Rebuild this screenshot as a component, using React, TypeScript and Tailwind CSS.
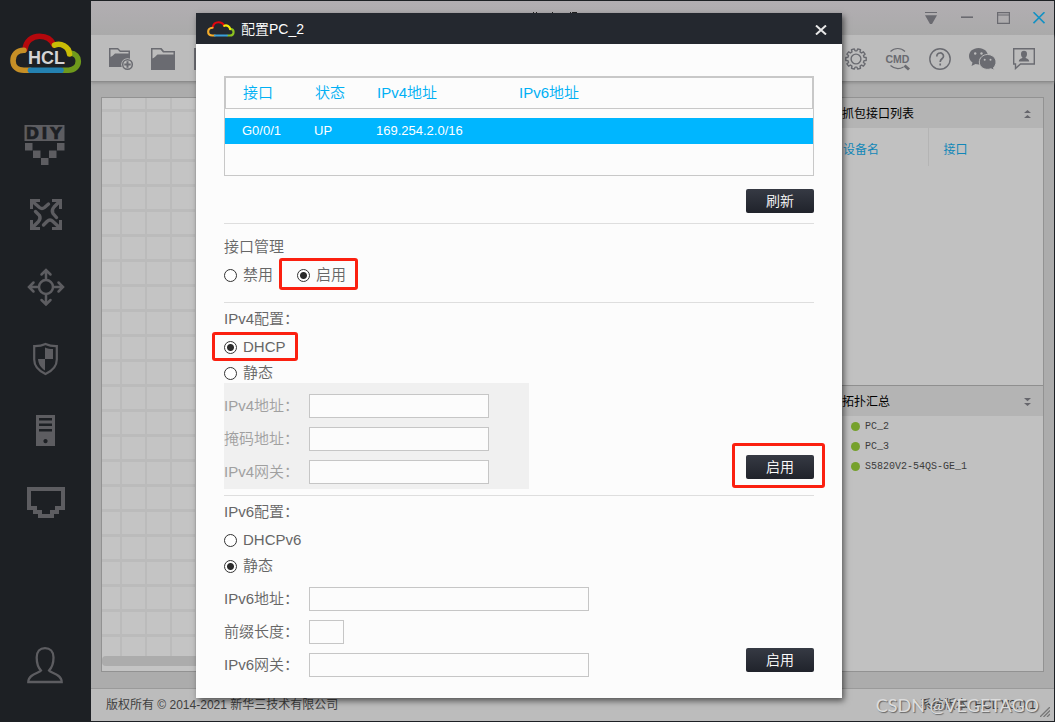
import React from 'react';

const SANS = "font-['Liberation_Sans','Noto_Sans_CJK_SC',sans-serif]";

function CloudArcs() {
  return (
    <g fill="none" strokeWidth="5.6" strokeLinecap="round">
      <path stroke="currentColor" className="text-[var(--red)]" d="M15 16.5C16 8 22 3.2 29.500 3.200C36 3.200 41.500 6.500 44 12" />
      <path stroke="currentColor" className="text-[var(--orange)]" d="M14 17.200C6.500 17.200 3 22 3 27.700C3 33.500 7.500 37.200 14 37.200L20 37.200" />
      <path stroke="currentColor" className="text-[var(--green)]" d="M60 20C65.500 20.500 68.300 24 68.300 28C68.300 33.500 64 37.200 58.500 37.200L53 37.200" />
      <path stroke="currentColor" className="text-[var(--blue)]" d="M20.500 37.200H51" />
      <path stroke="currentColor" className="text-[var(--yellow)]" d="M44.500 12.200C50.500 9.700 58.800 13 59.500 21" />
    </g>
  );
}

function Logo() {
  return (
    <svg viewBox="0 0 72 41" className="h-[41px] w-[72px] [--blue:#2481b1] [--green:#6f991c] [--orange:#c68f26] [--red:#b5080d] [--yellow:#c9bd06]" role="img" aria-label="HCL">
      <CloudArcs />
      <text x="36.500" y="30.500" textAnchor="middle" fontSize="18" fontWeight="700" fill="#d4d4d6" fontFamily="Liberation Sans, sans-serif">HCL</text>
    </svg>
  );
}

function MiniLogo() {
  return (
    <svg viewBox="0 0 72 41" className="h-4 w-7 [--blue:#3aa0dc] [--green:#8cc220] [--orange:#f4ac2c] [--red:#e2060d] [--yellow:#f8ea08]" aria-hidden="true">
      <CloudArcs />
    </svg>
  );
}

const sideItems = [
  {
    label: 'DIY',
    icon: (
      <>
        <rect x="24.500" y="18" width="40" height="16" fill="currentColor" />
        <g fill="#1d2024" stroke="#1d2024" strokeWidth="0.600" fontSize="16" fontWeight="700" fontFamily="DejaVu Sans, sans-serif" textAnchor="middle">
          <text x="32.500" y="32">D</text>
          <text x="44.500" y="32">I</text>
          <text x="56" y="32">Y</text>
        </g>
        <path fill="currentColor" d="M25 36h7.500v7.500h-7.500zM57 36h7.500v7.500h-7.500zM33 43.500h7.500v7.500h-7.500zM49 43.500h7.500v7.500h-7.500zM41 51h7.500v7h-7.500z" />
      </>
    ),
  },
  {
    label: '交换机',
    icon: (
      <g fill="none" stroke="currentColor" strokeWidth="3">
        <path d="M31.500 30V21.500H40M52 21.500H60.500V30M60.500 41V49.500H52M40 49.500H31.500V41" />
        <path strokeLinecap="round" strokeWidth="3.400" d="M32 22L39.500 28.500Q42 30.500 44.500 28.500L48.500 25M60 22L54 28Q51 31.500 53 34.500L56.500 38.500M60 49L53 42.500Q50 39.500 47 42.500L43.500 46M32 49L38.500 42.500Q41 39.500 39.500 36.500L35.500 32.500" />
      </g>
    ),
  },
  {
    label: '路由器',
    icon: (
      <g fill="none" stroke="currentColor" strokeWidth="2.500" strokeLinecap="round">
        <circle cx="46" cy="36" r="7" />
        <path d="M46 28.500V20M46 43.500V53M38.500 36H30M53.500 36H62M41.500 23.500L46 19L50.500 23.500M41.500 49L46 53.500L50.500 49M33.500 31.500L29 36L33.500 40.500M58.500 31.500L63 36L58.500 40.500" />
      </g>
    ),
  },
  {
    label: '防火墙',
    icon: (
      <>
        <path fill="none" stroke="currentColor" strokeWidth="2.200" d="M45.500 21C42 22.700 38 23.300 34.200 23.200V36.500C34.200 43.500 39 48 45.500 51C52 48 56.800 43.500 56.800 36.500V23.200C53 23.300 49 22.700 45.500 21Z" />
        <path fill="currentColor" d="M45 24.500C47.500 25.700 50 26 53 26V36H45ZM45 36V47.500C41 45 38.300 41 38 36Z" />
      </>
    ),
  },
  {
    label: '终端',
    icon: (
      <path fill="currentColor" fillRule="evenodd" d="M36 20h19v31h-19zM39 23v2.500h13v-2.500zM39 28.500v2.500h13v-2.500zM39 34v2.500h13v-2.500zM45.500 44a2.100 2.100 0 1 0 .010 0z" />
    ),
  },
  {
    label: '连线',
    icon: <path fill="none" stroke="currentColor" strokeWidth="4" d="M29 22H63V41H57V45H52V49H40V45H35V41H29Z" />,
  },
];

function Sidebar() {
  return (
    <aside className="relative z-10 flex w-[91px] shrink-0 flex-col bg-[#1d2024] pt-8 text-[#5d5d61]">
      <div className="flex h-[74px] justify-center">
        <Logo />
      </div>
      <nav className="flex flex-col">
        {sideItems.map((it) => (
          <button key={it.label} type="button" aria-label={it.label}>
            <svg viewBox="0 0 91 72" className="h-[72px] w-[91px]">{it.icon}</svg>
          </button>
        ))}
      </nav>
      <button type="button" aria-label="用户" className="mt-auto mb-[37px] flex justify-center">
        <svg viewBox="0 0 38 38" className="h-[38px] w-[38px]" fill="none" stroke="currentColor" strokeWidth="2.300">
          <path d="M14 24.500C10 20.500 9.700 15.500 9.700 11.500C9.700 5.500 13 2.200 18 2.200S26.500 5.500 26.500 11.500C26.500 15.500 26 20.500 22 24.500C23 27 34.700 27.500 34.700 36H1.300C1.300 27.500 13 27 14 24.500Z" />
        </svg>
      </button>
    </aside>
  );
}

function TitleBar() {
  const btn = 'flex h-[34px] w-[30px] items-center justify-center';
  return (
    <header className="relative flex h-[34px] justify-end gap-1.5 bg-linear-to-b from-[#b2aeb2] to-[#aaaaaa] text-[#6a6a70]">
      <svg viewBox="0 0 48 4" className="absolute top-[10px] left-[440px] h-1 w-12" fill="#222" aria-hidden="true">
        <path d="M2 1h1v2h-1zM5 1h1v2h-1zM21 1h1v2h-1zM39 1h1v2h-1zM41 1h5v2h-5z" />
      </svg>
      <button type="button" aria-label="菜单" className={btn}>
        <svg viewBox="0 0 12 12" className="size-3" fill="currentColor"><path d="M0 0h12v1h-12zM0 3.300h12L7 12h-2z" /></svg>
      </button>
      <button type="button" aria-label="最小化" className={btn}>
        <svg viewBox="0 0 12 12" className="size-3" fill="currentColor"><path d="M0 4.400h12v1.600h-12z" /></svg>
      </button>
      <button type="button" aria-label="最大化" className={btn}>
        <svg viewBox="0 0 13 12" className="h-3 w-[13px]" fill="none" stroke="currentColor" strokeWidth="1.200"><path d="M.6.6h11.800v10.800h-11.800zM.5 3h12" /></svg>
      </button>
      <button type="button" aria-label="关闭窗口" className={`${btn} text-[#1291c4]`}>
        <svg viewBox="0 0 12 12" className="size-3" fill="none" stroke="currentColor" strokeWidth="1.600"><path d="M.5.2l11 11M11.500.2l-11 11" /></svg>
      </button>
    </header>
  );
}

const FOLDER = 'M0 0H10.500L13 3H24V22H0ZM1.500 1.500V10.500C3.500 9.500 5 8 6.500 6.500H22.500V4.500H12L9.500 1.500Z';

function gearPath() {
  const pts: string[] = [];
  const n = 10;
  for (let i = 0; i < n; i++) {
    const a = (i * 2 * Math.PI) / n - Math.PI / 2 + Math.PI / n;
    const at = (r: number, d: number) => `${(11 + r * Math.cos(a + d)).toFixed(2)} ${(11 + r * Math.sin(a + d)).toFixed(2)}`;
    pts.push(at(8.2, -0.2), at(10.3, -0.14), at(10.3, 0.14), at(8.2, 0.2));
  }
  return `M${pts.join('L')}Z`;
}

function Toolbar() {
  const btn = 'flex w-[42px] items-center justify-center';
  return (
    <div className="flex h-[47px] items-stretch justify-between border-b border-[#8c8c8c] bg-[#bcbcbc] pt-0.5 pr-[9px] pl-[18px] text-[#6a6b71] shadow-[0_1px_3px_#8c8c8c]">
      <div className="flex items-center gap-[18px]">
        <button type="button" aria-label="新建工程">
          <svg viewBox="0 0 24 22" className="h-[22px] w-6 overflow-visible">
            <path fill="currentColor" fillRule="evenodd" d="M0 0H9L11.500 2.500H21V19H0ZM1.500 1.500V9C3.500 8 4.500 7 6 5.500H19.500V4H11L8.500 1.500Z" />
            <circle cx="18.500" cy="16.500" r="6.300" fill="#bcbcbc" />
            <circle cx="18.500" cy="16.500" r="4.800" fill="#bcbcbc" stroke="currentColor" strokeWidth="1.500" />
            <path stroke="currentColor" strokeWidth="2" d="M18.500 13.300v6.400M15.300 16.500h6.400" />
          </svg>
        </button>
        <button type="button" aria-label="打开工程">
          <svg viewBox="0 0 24 22" className="h-[22px] w-6" fill="currentColor" fillRule="evenodd"><path d={FOLDER} /></svg>
        </button>
        <button type="button" aria-label="保存工程">
          <svg viewBox="0 0 24 22" className="h-[22px] w-6" fill="currentColor"><path d="M1 0h22v22h-22z" /></svg>
        </button>
      </div>
      <div className="flex">
        <button type="button" aria-label="设置" className={btn}>
          <svg viewBox="0 0 22 22" className="size-[22px]" fill="none" stroke="currentColor" strokeWidth="1.400" strokeLinejoin="round"><path d={gearPath()} /><circle cx="11" cy="11" r="4.900" /></svg>
        </button>
        <button type="button" aria-label="命令行" className={btn}>
          <svg viewBox="0 0 26 24" className="h-6 w-[26px] overflow-visible" fill="none" stroke="currentColor">
            <path strokeWidth="1.200" d="M5.500 4.500C9.500 0.500 16 0.500 20 4.500M5.500 18.500C9.500 22 14.500 22.300 18.500 20" />
            <path strokeWidth="3" d="M19.500 18.500L24 22.500" />
            <text x="12.500" y="15.500" textAnchor="middle" fontSize="10.500" fontWeight="700" fill="currentColor" stroke="none" fontFamily="Liberation Sans, sans-serif">CMD</text>
          </svg>
        </button>
        <button type="button" aria-label="帮助" className={btn}>
          <svg viewBox="0 0 22 22" className="size-[22px]" fill="none" stroke="currentColor" strokeWidth="1.400">
            <circle cx="11" cy="11" r="10.200" />
            <path strokeWidth="1.700" d="M7.800 8.500C7.800 3.800 14.500 3.900 14.500 8.200C14.500 10.800 11.200 10.800 11.200 14M11.200 15.500V17.500" />
          </svg>
        </button>
        <button type="button" aria-label="微信" className={btn}>
          <svg viewBox="0 0 27 22" className="h-[22px] w-[27px]">
            <path fill="currentColor" d="M9.500 0C15 0 19 3.600 19 8.200S15 16.500 9.500 16.500C8.500 16.500 7.500 16.300 6.500 16L2.500 18L3.500 14.500C1.300 13 0 10.800 0 8.200C0 3.600 4 0 9.500 0Z" />
            <path fill="currentColor" stroke="#bcbcbc" d="M18.500 6.500C23.200 6.500 27 9.800 27 14C27 16.300 26 18.200 24.500 19.500L25.300 22.300L22 20.800C16 22.700 10.300 19.500 10.300 14C10.300 9.800 14 6.500 18.500 6.500Z" />
            <g fill="#bcbcbc"><circle cx="6.200" cy="5.500" r="1.200" /><circle cx="12.500" cy="5.500" r="1.200" /><circle cx="15.700" cy="11.700" r="1" /><circle cx="21.500" cy="11.700" r="1" /></g>
          </svg>
        </button>
        <button type="button" aria-label="反馈" className={btn}>
          <svg viewBox="0 0 22 22" className="size-[22px]">
            <path fill="none" stroke="currentColor" strokeWidth="1.400" d="M.7.7H21.300V16H7.500L2.500 20.500V16H.7Z" />
            <path fill="currentColor" d="M11 2.800C13 2.800 14 4 14 6C14 7.800 13.300 8.800 12.500 9.500C13 10.800 16 10.500 16.200 13.500H5.800C6 10.500 9 10.800 9.500 9.500C8.700 8.800 8 7.800 8 6C8 4 9 2.800 11 2.800Z" />
          </svg>
        </button>
      </div>
    </div>
  );
}

function PanelHead({ title, flip }: { title: string; flip?: boolean }) {
  return (
    <div className="flex h-[30px] items-center justify-between bg-[#b4b4b4] pt-0.5 pr-3 pl-2 text-xs text-black">
      <h2>{title}</h2>
      <svg viewBox="0 0 7 8" className="h-2 w-[7px] text-[#66666c]" fill="currentColor" aria-hidden="true">
        <path d={flip ? 'M0 0h7L3.500 3.300zM0 5h7L3.500 8z' : 'M0 3h7L3.500 0zM0 8h7L3.500 5z'} />
      </svg>
    </div>
  );
}

function RightPanel() {
  return (
    <section className="flex w-[211px] shrink-0 flex-col border border-[#929292] bg-[#c1c1c1]">
      <PanelHead title="抓包接口列表" />
      <table className="w-full table-fixed text-left text-xs text-[#1187b8]">
        <thead>
          <tr className="h-[38px]">
            <th className="w-[94px] border-r border-[#b4b4b4] pt-1.5 pl-[9px] font-normal">设备名</th>
            <th className="pt-1.5 pl-[15px] font-normal">接口</th>
          </tr>
        </thead>
      </table>
      <div className="mt-[219px] border-t border-[#8f8f8f]">
        <PanelHead title="拓扑汇总" flip />
        <ul className="font-['Liberation_Mono',monospace] text-[10px] text-[#3c3c3c]">
          {['PC_2', 'PC_3', 'S5820V2-54QS-GE_1'].map((n) => (
            <li key={n} className="flex h-5 items-center gap-[5px] pl-[17px]">
              <span className="size-[9px] rounded-full bg-[#76a12d]" />
              {n}
            </li>
          ))}
        </ul>
      </div>
    </section>
  );
}

function Workspace() {
  return (
    <div className="flex flex-1 items-stretch gap-2 px-2.5 pt-[15px] pb-4">
      <section aria-label="画布" className="flex flex-1 flex-col justify-end border border-[#929292] bg-[#c4c4c4]">
        <div className="flex-1 bg-[linear-gradient(to_right,#bbbbbb_2px,transparent_2px),linear-gradient(to_bottom,#bbbbbb_3px,transparent_3px)] bg-[length:25px_25px] bg-[position:18px_11px]" />
        <div className="mb-[5px] h-2.5 rounded-sm bg-[#acacac]" />
      </section>
      <RightPanel />
    </div>
  );
}

function Footer() {
  return (
    <footer className="relative flex h-[33px] items-center justify-between border-t border-[#9a9a9a] bg-[#bcbcbc] pr-[18px] pl-[15px] text-xs text-[#3f3f3f]">
      <p>版权所有 © 2014-2021 新华三技术有限公司</p>
      <p>系统版本: HCL V3.0.1</p>
      <svg viewBox="0 0 10 10" className="absolute right-1 bottom-1 size-2.5" stroke="#777" strokeWidth="1.300" aria-hidden="true">
        <path d="M0 10L10 0M3.500 10L10 3.500M7 10L10 7" />
      </svg>
      <p className="absolute right-[15px] bottom-1 font-['Lato',sans-serif] text-lg leading-6 text-[#dcdcdc] [text-shadow:1px_1px_1px_#666]">CSDN @VEGETAGO</p>
    </footer>
  );
}

function Radio({ name, label, checked }: { name: string; label: string; checked?: boolean }) {
  return (
    <label className="flex items-center gap-1.5">
      <input
        type="radio"
        name={name}
        defaultChecked={checked}
        className="size-[13px] appearance-none rounded-full border border-[#333] bg-white bg-clip-padding checked:bg-[radial-gradient(circle,#2b2b2b_3px,#fff_4px)]"
      />
      {label}
    </label>
  );
}

function Field({ id, label, size, disabled }: { id: string; label: string; size: string; disabled?: boolean }) {
  return (
    <div className="flex h-6 items-center">
      <label htmlFor={id} className="w-[85px] shrink-0 whitespace-nowrap">{label}</label>
      <input id={id} type="text" disabled={disabled} className={`h-6 border border-[#c6c6c6] bg-[#fcfcfc] px-1 text-[13px] ${size}`} />
    </div>
  );
}

function DarkButton({ children }: { children: React.ReactNode }) {
  return (
    <button type="button" className="flex h-6 w-[68px] items-center justify-center rounded-[2px] bg-linear-to-b from-[#363a44] to-[#20232b] text-sm text-white">
      {children}
    </button>
  );
}

function Mark({ place }: { place: string }) {
  return <span aria-hidden="true" className={`pointer-events-none absolute rounded-[3px] border-3 border-[#fb2010] ${place}`} />;
}

function ConfigDialog() {
  return (
    <div role="dialog" aria-label="配置PC_2" className="w-[646px] bg-[#fcfcfc] pb-[21px] text-[15px] leading-5 font-[350] text-[#666] shadow-[2px_3px_6px_rgba(0,0,0,0.55)]">
      <div className="flex h-[31px] items-center bg-[#24282f] pr-[15px] pl-[11px] text-sm text-white">
        <MiniLogo />
        <h1 className="ml-1.5 flex-1">配置PC_2</h1>
        <button type="button" aria-label="关闭" className="pt-0.5">
          <svg viewBox="0 0 12 10" className="h-2.5 w-3" fill="none" stroke="#e8e8e8" strokeWidth="2"><path d="M1 .5l10 9M11 .5l-10 9" /></svg>
        </button>
      </div>

      <div className="px-7 pt-8">
        <div className="h-[100px] border border-[#c8c8c8]">
          <table className="w-full table-fixed border-separate border-spacing-0 text-left">
            <thead>
              <tr className="h-8 text-[#00b0f4]">
                <th className="w-[73px] border-y border-l border-[#c8c8c8] pl-[17px] font-[350]">接口</th>
                <th className="w-[62px] border-y border-[#c8c8c8] pl-[17px] font-[350]">状态</th>
                <th className="w-[142px] border-y border-[#c8c8c8] pl-[17px] font-[350]">IPv4地址</th>
                <th className="border-y border-r border-[#c8c8c8] pl-[17px] font-[350]">IPv6地址</th>
              </tr>
            </thead>
            <tbody className="before:block before:h-[9px]">
              <tr className="h-[26px] bg-[#00b6ff] text-[13px] text-white">
                <td className="pl-[17px]">G0/0/1</td>
                <td className="pl-4">UP</td>
                <td className="pl-4">169.254.2.0/16</td>
                <td />
              </tr>
            </tbody>
          </table>
        </div>

        <div className="flex justify-end pt-[13px] pb-2.5">
          <DarkButton>刷新</DarkButton>
        </div>

        <section className="h-[79px] border-t border-[#dedede] pt-[13px]">
          <h2>接口管理</h2>
          <div className="mt-2 flex gap-6">
            <Radio name="port" label="禁用" />
            <div className="relative">
              <Radio name="port" label="启用" checked />
              <Mark place="-top-[7px] -bottom-[5px] -left-[18px] -right-3" />
            </div>
          </div>
        </section>

        <section className="h-[193px] border-t border-[#dedede] pt-1.5">
          <h2>IPv4配置：</h2>
          <div className="mt-2 flex flex-col items-start gap-1.5">
            <div className="relative">
              <Radio name="ipv4" label="DHCP" checked />
              <Mark place="-top-[5px] -bottom-1 -left-3 -right-3" />
            </div>
            <Radio name="ipv4" label="静态" />
          </div>
          <div className="flex items-end justify-between">
            <div className="flex w-[305px] flex-col gap-[9px] bg-[#f0f0f0] pt-[11px] pb-[5px] text-[#a0a0a0]">
              <Field id="v4addr" label="IPv4地址：" size="w-[180px]" disabled />
              <Field id="v4mask" label="掩码地址：" size="w-[180px]" disabled />
              <Field id="v4gw" label="IPv4网关：" size="w-[180px]" disabled />
            </div>
            <div className="relative mb-2.5">
              <DarkButton>启用</DarkButton>
              <Mark place="-top-3 -bottom-[9px] -left-3.5 -right-[11px]" />
            </div>
          </div>
        </section>

        <section className="border-t border-[#dedede] pt-1.5">
          <h2>IPv6配置：</h2>
          <div className="mt-2 flex flex-col items-start gap-1.5">
            <Radio name="ipv6" label="DHCPv6" />
            <Radio name="ipv6" label="静态" checked />
          </div>
          <div className="flex items-end justify-between pt-[11px]">
            <div className="flex flex-col gap-[9px]">
              <Field id="v6addr" label="IPv6地址：" size="w-[280px]" />
              <Field id="v6len" label="前缀长度：" size="w-[35px]" />
              <Field id="v6gw" label="IPv6网关：" size="w-[280px]" />
            </div>
            <div className="mb-[5px]">
              <DarkButton>启用</DarkButton>
            </div>
          </div>
        </section>
      </div>
    </div>
  );
}

export default function App() {
  return (
    <div className={`relative flex min-h-screen border-t border-r border-b border-[#1d2024] bg-[#acacac] ${SANS}`}>
      <Sidebar />
      <main className="flex min-w-0 flex-1 flex-col">
        <TitleBar />
        <Toolbar />
        <Workspace />
        <Footer />
      </main>
      <div className="absolute inset-0 z-20 flex items-start justify-center pt-3 pr-4">
        <ConfigDialog />
      </div>
    </div>
  );
}
